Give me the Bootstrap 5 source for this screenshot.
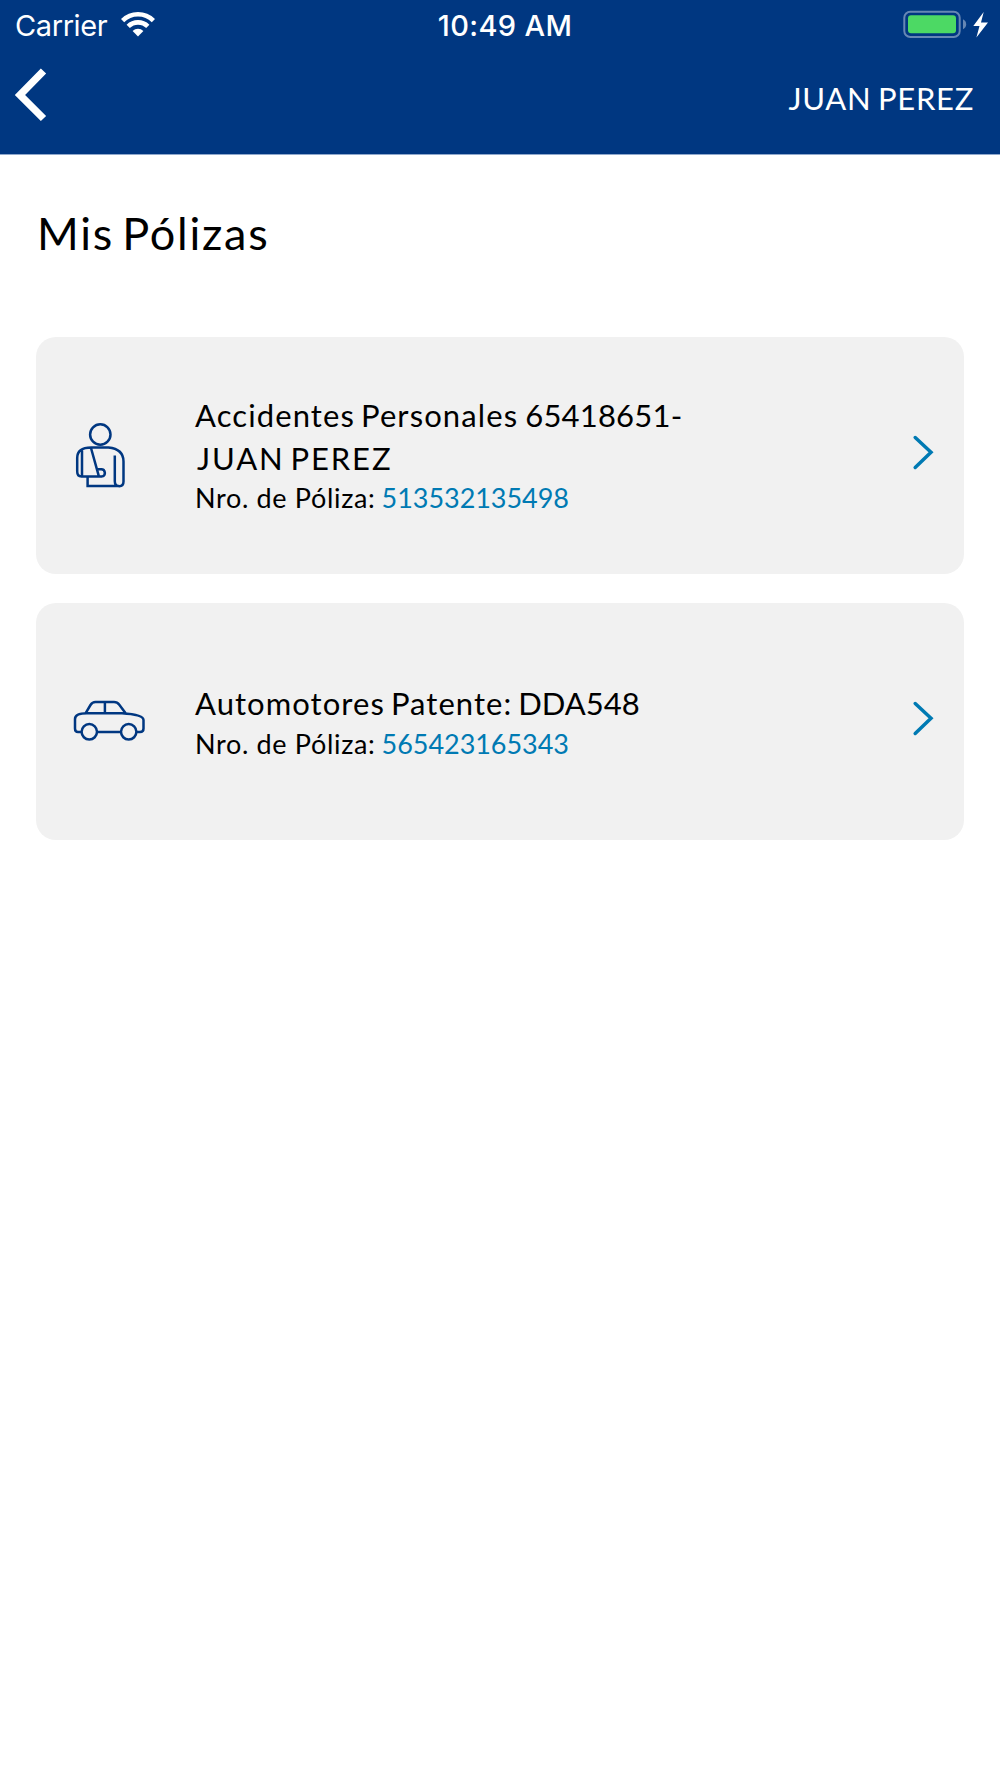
<!DOCTYPE html>
<html lang="es">
<head>
<meta charset="utf-8">
<meta name="viewport" content="width=device-width, initial-scale=1">
<title>Mis Pólizas</title>
<link href="https://cdn.jsdelivr.net/npm/bootstrap@5.3.0/dist/css/bootstrap.min.css" rel="stylesheet">
<script src="https://cdn.jsdelivr.net/npm/bootstrap@5.3.0/dist/js/bootstrap.bundle.min.js"></script>
<style>
body{font-family:Lato,"Open Sans",sans-serif;color:#000;background:#fff}
svg{display:block;fill:none;flex:none}
.app-header{background:#003781;color:#fff;height:154.5px;border-bottom:1px solid #8fa8cc}
.status-bar{height:51px;padding:0 11px 0 15px;font:400 29px/51px Inter,sans-serif}
.status-side{flex:1 1 0}
.carrier-name{letter-spacing:-.4px}
.wifi-icon{margin:-2px 0 0 14px}
.status-time{font-weight:500;letter-spacing:.35px;margin-left:6px}
.status-icons{margin-top:-3px}
.title-bar{height:102px;padding:0 26px 8px 12px}
.back-icon{margin-top:-6px}
.user-name{font-size:31px;line-height:40px;letter-spacing:.7px;word-spacing:-2px}
.page-main{padding:52px 36px 0}
.page-title{font-size:45px;line-height:53px;letter-spacing:1.75px;word-spacing:-5px;margin:0 0 77px 1px}
.policy-card{height:237px;border:0;border-radius:20px;background:#f1f1f1;color:#000;padding:0 30px 0 36px}
.policy-list{gap:29px}
.icon-cell{width:123px}
.policy-name{font-size:31px;line-height:43px}
.policy-number{font-size:27px;line-height:36px}
.wide-1{letter-spacing:1.1px;word-spacing:-3px}
.wide-2{letter-spacing:1.9px;word-spacing:-4px;padding-left:2px}
.digits{letter-spacing:.2px;padding-left:1px}
.policy-number .label-text{letter-spacing:.66px}
.policy-number a{color:#007ab3;margin-left:-1.5px;letter-spacing:-.05px}
.single-line .policy-text{padding-top:1px}
.single-line .policy-number{line-height:37px}
.single-line .wide-1{letter-spacing:1.05px}
.arrow-icon{margin-top:-6px}
</style>
</head>
<body>
<header class="app-header">
  <div class="status-bar d-flex align-items-center">
    <div class="status-side d-flex align-items-center">
      <span class="carrier-name">Carrier</span>
      <svg class="wifi-icon" width="34" height="25" viewBox="0 0 34 25">
        <g stroke="#fff" stroke-width="4.6">
          <path d="M1.6 8.6a22 22 0 0 1 30.8 0"/>
          <path d="M7.2 14.4a14 14 0 0 1 19.6 0"/>
        </g>
        <path fill="#fff" d="M11.6 18.9a8.2 8.2 0 0 1 10.8 0L17 24.4z"/>
      </svg>
    </div>
    <span class="status-time">10:49 AM</span>
    <div class="status-side d-flex justify-content-end">
      <svg class="status-icons" width="86" height="28" viewBox="903 10 86 28">
        <rect x="904.3" y="11.8" width="55.4" height="25.2" rx="6" stroke="#6687b4" stroke-width="2"/>
        <rect x="908" y="15.2" width="48" height="18" rx="3" fill="#4cd964"/>
        <path fill="#6687b4" d="M963 19.3q3.2 1.6 3.2 5t-3.2 5z"/>
        <path fill="#fff" d="M983.7 12 973.3 26h6.2l-3.1 11.6L988 22.4h-7z"/>
      </svg>
    </div>
  </div>
  <div class="title-bar d-flex align-items-center justify-content-between">
    <svg class="back-icon" width="38" height="56" viewBox="12 67 38 56" stroke="#fff" stroke-width="7.4"><path d="M43.5 71 20 95l23.5 23.5"/></svg>
    <span class="user-name">JUAN PEREZ</span>
  </div>
</header>

<main class="page-main">
  <h1 class="page-title fw-normal">Mis Pólizas</h1>
  <div class="policy-list d-flex flex-column">
    <div class="policy-card card flex-row align-items-center">
      <div class="icon-cell">
        <svg width="56" height="68" viewBox="72 421 56 68" stroke="#003781" stroke-width="2.5">
          <circle cx="100.3" cy="434.5" r="10.2"/>
          <path d="M102 476.6H81.5q-4.300 0-4.300-5V458q0-10.500 14-10.500h17.300q15 1.500 15 14v20q0 4.700-4.200 4.700-4.500 0-4.500-5V455.500M82 450.500v25.600M91 448l7.900 28.300M97.500 469.300h3.500a3.700 3.700 0 0 1 1 7.300M87.600 477v9h31.500"/>
        </svg>
      </div>
      <div class="policy-text flex-grow-1">
        <div class="policy-name"><span class="wide-1">Accidentes Personales </span><span class="digits">65418651-</span><br><span class="wide-2">JUAN PEREZ</span></div>
        <div class="policy-number"><span class="label-text">Nro. de Póliza: </span><a href="#" class="text-decoration-none">513532135498</a></div>
      </div>
      <svg class="arrow-icon" width="22" height="36" viewBox="912 434 22 36" stroke="#007ab3" stroke-width="3.5" stroke-linecap="round"><path d="M915.2 437.5 931 452.3l-15.8 15.2"/></svg>
    </div>
    <div class="policy-card single-line card flex-row align-items-center">
      <div class="icon-cell">
        <svg width="74" height="44" viewBox="72 699 74 44" stroke="#003781" stroke-width="2.5">
          <path d="M85.5 713.3 90.5 705q1.800-2.900 5-2.900h18.500q3.300 0 5.300 2.600l6.500 8.800M104.900 702v11.300M82 732h-4q-3 0-3-3.500V719q0-5.700 12-5.700h35q21.500 1.500 21.500 6.700v8.500q0 3.500-3.500 3.500h-4M97 732h24"/>
          <circle cx="89.3" cy="731.8" r="7.7"/>
          <circle cx="128.7" cy="731.8" r="7.7"/>
        </svg>
      </div>
      <div class="policy-text flex-grow-1">
        <div class="policy-name"><span class="wide-1">Automotores Patente: </span>DDA548</div>
        <div class="policy-number"><span class="label-text">Nro. de Póliza: </span><a href="#" class="text-decoration-none">565423165343</a></div>
      </div>
      <svg class="arrow-icon" width="22" height="36" viewBox="912 434 22 36" stroke="#007ab3" stroke-width="3.5" stroke-linecap="round"><path d="M915.2 437.5 931 452.3l-15.8 15.2"/></svg>
    </div>
  </div>
</main>
</body>
</html>
